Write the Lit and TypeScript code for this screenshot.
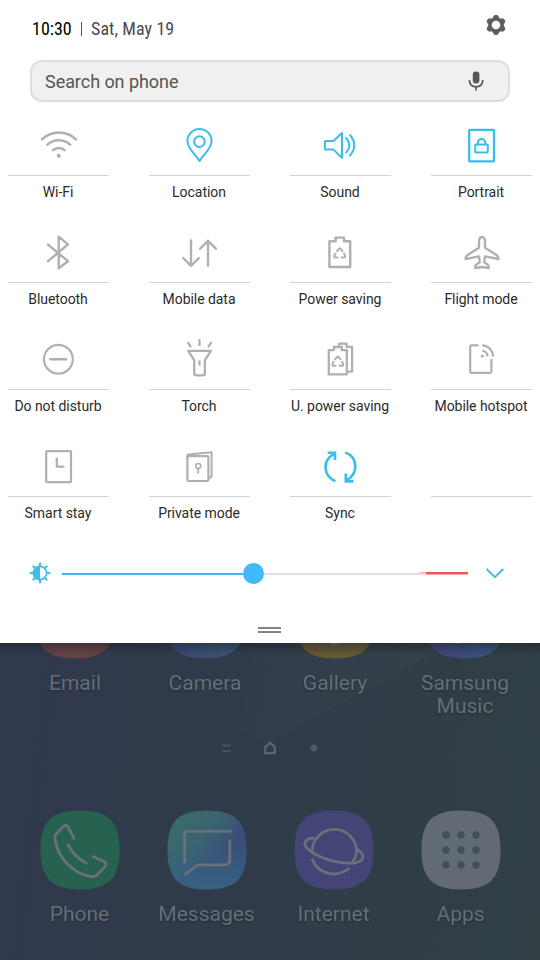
import { LitElement, html, svg, css, type SVGTemplateResult } from "lit";
import { customElement, property } from "lit/decorators.js";

const recycle = (x: number, y: number) => svg`
  <g transform="translate(${x} ${y})" stroke-width="2" stroke-linecap="butt">
    <path d="M-3.2 -1.4L-0.7 -4.6Q0 -5.4 0.7 -4.6L3.2 -1.4"/>
    <path d="M-4 -0.4L-5.3 2.4Q-6 4.4 -4.2 4.4L-1.4 4.4"/>
    <path d="M4 -0.4L5.3 2.4Q6 4.4 4.2 4.4L1 4.4"/>
  </g>`;

const icons: Record<string, SVGTemplateResult> = {
  wifi: svg`
    <path stroke-width="2.5" d="M8 18.3A24.5 24.5 0 0 1 42 18.3M13.4 23.7A16.6 16.6 0 0 1 36.2 23.7M19 29.2A8.6 8.6 0 0 1 30.6 29.2"/>
    <circle class="solid" cx="24.7" cy="34.8" r="2"/>`,
  location: svg`
    <path d="M24.5 40C21 33.8 12.4 28 12.4 20A12.1 12.1 0 0 1 36.6 20C36.6 28 28 33.8 24.5 40Z"/>
    <circle cx="24.4" cy="20.6" r="5.3"/>`,
  sound: svg`
    <path d="M9.4 20H17.4L26 12V36.8L17.4 28.6H9.4Q8.9 28.6 8.9 28V20.6Q8.9 20 9.4 20Z"/>
    <path d="M30.2 17Q36.6 24.3 30.2 31.5M34 14Q42.6 24.3 34 34.5"/>`,
  portrait: svg`
    <rect x="12.2" y="8.9" width="24.8" height="31.4" rx="0.6" stroke-width="2.3"/>
    <rect x="18.2" y="23.6" width="12.6" height="8" rx="0.8"/>
    <path d="M20.8 23.4V21.6A3.7 3.7 0 0 1 28.2 21.6V23.4"/>`,
  bluetooth: svg`<path stroke-width="2.4" d="M14 16.6L34 33.2L24.7 40.2V8.6L34 16.4L14 33.2"/>`,
  data: svg`<path stroke-width="2.4" d="M16 12.4V37.4M8.2 30L16 37.8L23.8 30M33 37.6V13M25.2 20.6L33 12.8L40.8 20.6"/>`,
  power: svg`
    <path d="M13.4 13.2H19.6V9.6H28V13.2H34.2V39H13.4Z" stroke-width="2.4"/>
    ${recycle(23.7, 25.2)}`,
  flight: svg`<path stroke-width="2.4" d="M25 9C22.9 9 22 11.2 22 14V19.8L10.2 27.2Q8.4 28.6 8.6 31L22 28.4Q22.6 31.6 22.6 34.6L19 36.8Q18 38 18.3 40L25 39L31.7 40Q32 38 31 36.8L27.4 34.6Q27.4 31.6 28 28.4L41.4 31Q41.6 28.6 39.8 27.2L28 19.8V14C28 11.2 27.1 9 25 9Z"/>`,
  dnd: svg`<circle cx="24.4" cy="24.2" r="14.4" stroke-width="2.2"/><path stroke-width="2.4" d="M16.4 24.2H32"/>`,
  torch: svg`
    <path stroke-width="2.3" d="M13.2 15.8H36L29.9 25.2V38Q29.9 40.4 27.4 40.4H21.6Q19.2 40.4 19.2 38V25.2Z"/>
    <path stroke-width="2.2" stroke-linecap="butt" d="M24.5 4V11M12.6 7.2L16 12.2M36.5 7.2L33.1 12.2M24.5 25.4V30.4"/>`,
  upower: svg`
    <path stroke-width="2.3" d="M12.8 15.2H18V12H25.8V15.2H30.8V39.4H12.8Z"/>
    <path stroke-width="2.3" d="M23.2 11.4V8.6H30.6V11.8H36.1V36.6H31.4"/>
    ${recycle(21.8, 26.4)}`,
  hotspot: svg`
    <path stroke-width="2.2" stroke-linecap="butt" d="M21.6 10.4H14.4Q13.2 10.4 13.2 11.6V36.6Q13.2 37.8 14.4 37.8H33.2Q34.4 37.8 34.4 36.6V24"/>
    <path stroke-width="2.2" stroke-linecap="butt" d="M25.2 10.4A11 11 0 0 1 36 21.4M25.2 15.8A5.6 5.6 0 0 1 30.6 21.4"/>
    <circle class="solid" cx="25.2" cy="21" r="1.6"/>`,
  stay: svg`
    <rect x="12.2" y="9.2" width="24.8" height="31" rx="0.6" stroke-width="2.2"/>
    <path stroke-width="2.3" stroke-linejoin="miter" stroke-linecap="butt" d="M22.8 15.6V24.6H30.4"/>`,
  private: svg`
    <rect x="12.4" y="14.2" width="21" height="24.8" rx="1.2" stroke-width="2.2"/>
    <path d="M12.4 15V13.2Q12.4 12.6 13.2 12.5L36.6 10.3V34.6Q36.6 35.6 34 35.8"/>
    <circle cx="23.2" cy="24" r="2.5" stroke-width="1.7"/><path stroke-width="1.8" stroke-linecap="butt" d="M23.2 26.4V31.6"/>`,
  sync: svg`
    <path stroke-width="2.6" stroke-linecap="butt" d="M19.4 39.2C7.4 34 5.6 19 18 11.8M29.2 10.4C41.6 15 43.2 31 30.6 38.4"/>
    <path stroke-width="2.6" stroke-linecap="butt" stroke-linejoin="miter" d="M11.6 10.8H19V18M29.8 31.4V39.4H37.4"/>`,
};

/* Rounded-square launcher shape on an 80 unit grid. */
const squircle = "M40 0.5C68.5 0.5 79.5 11.5 79.5 40S68.5 79.5 40 79.5S0.5 68.5 0.5 40S11.5 0.5 40 0.5Z";

@customElement("quick-tile")
class QuickTile extends LitElement {
  @property() icon = "";
  @property() label = "";
  @property({ type: Boolean, reflect: true }) on = false;

  static styles = css`
    :host { display: flex; flex-direction: column; align-items: center; color: #b0b0b0; height: 107px; }
    :host([on]) { color: #3bbdea; }
    .icon {
      width: 49px; height: 49px; display: block; fill: none;
      stroke: currentColor; stroke-width: 2; stroke-linejoin: round; stroke-linecap: round;
    }
    .solid { fill: currentColor; stroke: none; }
    .label {
      align-self: stretch; margin-top: 5px; border-top: 1px solid #d3d3d3; padding: 7px 1px 0 0;
      color: #2b2b2b; font-size: 14px; line-height: 18px; letter-spacing: -0.05px;
      white-space: nowrap; display: flex; justify-content: center;
    }
  `;

  render() {
    return html`
      <svg class="icon" viewBox="0 0 49 49">${icons[this.icon]}</svg>
      <div class="label">${this.label}</div>`;
  }
}

@customElement("app-icon")
class AppIcon extends LitElement {
  @property() kind = "";
  @property() label = "";

  static styles = css`
    :host { display: flex; flex-direction: column; align-items: center; }
    .art { width: 80px; height: 80px; display: block; overflow: visible; fill: none; }
    .line { stroke: #69707a; stroke-width: 2.8; stroke-linejoin: round; }
    .pale { fill: #69707a; }
    .dot { fill: #424e5b; }
    .label {
      margin-top: 13px; color: #656d77; font-size: 21px; line-height: 23px; text-align: center;
      text-shadow: 0 1px 2px rgba(0, 0, 0, 0.3);
    }
  `;

  art() {
    switch (this.kind) {
      case "email": return svg`<path d=${squircle} fill="#654246"/>`;
      case "camera": return svg`
        <linearGradient id="g"><stop offset="0" stop-color="#3a4772"/><stop offset="1" stop-color="#3c5670"/></linearGradient>
        <path d=${squircle} fill="url(#g)"/>`;
      case "gallery": return svg`
        <linearGradient id="g"><stop offset="0" stop-color="#685537"/><stop offset="1" stop-color="#625c32"/></linearGradient>
        <path d=${squircle} fill="url(#g)"/><circle class="pale" cx="39.6" cy="62.5" r="4.6"/>`;
      case "music": return svg`
        <linearGradient id="g"><stop offset="0" stop-color="#43427a"/><stop offset="1" stop-color="#355676"/></linearGradient>
        <path d=${squircle} fill="url(#g)"/><ellipse class="pale" cx="31.5" cy="62.6" rx="4.4" ry="2.2"/>`;
      case "phone": return svg`
        <path d=${squircle} fill="#276150"/>
        <path class="line" d="M34.5 29.5L28.4 17.6Q26.5 13.6 23.2 16.6L16.2 24Q14.6 25.8 15 29C17.5 48 34 65 52 66.6Q55 66.8 57 65L65 56.6Q67.6 53.4 64 51.6L52 46"/>
        <path class="line" d="M27.4 33.4C31.6 42.6 38.4 49.4 47.2 53.8"/>`;
      case "messages": return svg`
        <linearGradient id="g" x1="0.1" y1="0.1" x2="0.9" y2="0.75"><stop offset="0" stop-color="#3b6b69"/><stop offset="0.4" stop-color="#3a6470"/><stop offset="0.75" stop-color="#394e79"/><stop offset="1" stop-color="#38507b"/></linearGradient>
        <linearGradient id="b" x1="0" y1="0" x2="0" y2="1"><stop offset="0.4" stop-color="#376180" stop-opacity="0"/><stop offset="1" stop-color="#376180"/></linearGradient>
        <path d=${squircle} fill="url(#g)"/><path d=${squircle} fill="url(#b)"/>
        <path class="line" d="M64.5 21.4H20.4Q17.6 21.4 17.6 24.4V53.6M62.8 29.6V50.6Q62.8 54.8 58.6 54.8H30.6L17.8 64.6"/>`;
      case "internet": return svg`
        <path d=${squircle} fill="#434577"/>
        <path class="line" d="M18 41A22.3 22.3 0 1 1 62.6 42.4Q61.6 48 58.6 52.2"/>
        <path class="line" d="M20.6 28C10.6 28.2 8.2 34 14.2 39.4C26.6 50 49.4 54.8 62.6 52.6C71 50.6 70.6 43.2 62.4 39"/>
        <path class="line" d="M18 48.4C24.5 65.6 43 68 55.6 58"/>`;
      default: return svg`
        <path d=${squircle} fill="#626a75"/>
        ${[25, 40, 55].map((y) => [25, 40, 55].map((x) => svg`<circle class="dot" cx=${x} cy=${y} r="3.7"/>`))}`;
    }
  }

  render() {
    return html`<svg class="art" viewBox="0 0 80 80">${this.art()}</svg><div class="label">${this.label}</div>`;
  }
}

@customElement("app-root")
class AppRoot extends LitElement {
  static styles = css`
    :host {
      display: flex; flex-direction: column; width: 540px; height: 960px; overflow: hidden;
      font-family: Roboto, "Liberation Sans", sans-serif; background: #2f3b47;
    }
    * { box-sizing: border-box; }
    svg { display: block; flex: none; }
    .panel { height: 643px; flex: none; background: #fff; display: flex; flex-direction: column; }
    .status { height: 60px; padding: 0 33px 3px 32px; display: flex; align-items: center; font-size: 18px; font-stretch: 75%; }
    .time { color: #000; font-weight: 450; width: 40px; }
    .rule { width: 1px; height: 14px; background: #555; margin: 0 9px 0 9px; }
    .date { color: #4a4a4a; letter-spacing: 0.08px; }
    .gear { margin: 0 0 7px auto; }
    .search {
      height: 42px; margin: 0 30px; padding: 0 24px 0 13px; border: 2px solid #dedede; border-radius: 12px;
      background: #f0f0f0; display: flex; align-items: center; justify-content: space-between;
      color: #555; font-size: 18px; letter-spacing: -0.05px;
    }
    .tiles { display: grid; grid-template-columns: repeat(4, 101px); column-gap: 40px; padding: 19px 8px 0; }
    .bright { height: 32px; margin: 8px 36px 0 28px; display: flex; align-items: center; }
    .track { flex: none; width: 406px; height: 21px; margin-left: 10px; position: relative; display: flex; align-items: center; }
    .full { width: 191px; height: 2px; margin-top: 1px; background: #40b5fc; }
    .rest { width: 167px; height: 2px; margin-top: 1px; background: #dfdfdf; }
    .hot { width: 48px; height: 3px; background: #f05558; clip-path: polygon(0 0, 100% 0, 100% 100%, 6px 100%, 6px 1px, 0 1px); }
    .under { width: 6px; height: 2px; margin: 1px -6px 0 0; background: #dfdfdf; }
    .thumb { position: absolute; left: 181px; top: 0; width: 21px; height: 21px; border-radius: 50%; background: #40b9ff; }
    .more { margin-left: auto; }
    .grip { width: 23px; height: 6px; margin: auto 0 10px 258px; border: solid #858585; border-width: 2px 0; }
    .home {
      flex: 1; position: relative; overflow: hidden; display: flex; flex-direction: column;
      background: linear-gradient(97deg, #31394d 0%, #2f3b4b 38%, #303c47 62%, #313f45 100%);
    }
    .facet {
      position: absolute; inset: 0;
      background: linear-gradient(100deg, rgba(60, 76, 88, 0) 35%, rgba(66, 80, 88, 0.22) 75%);
      clip-path: polygon(0 0, 84% 0, 50% 99px, 34% 70px, 0 0);
    }
    .shade { position: absolute; inset: 0 0 auto; height: 12px; background: linear-gradient(rgba(20, 26, 32, 0.4), rgba(20, 26, 32, 0)); }
    .row { position: relative; display: grid; grid-template-columns: repeat(4, 130px); padding-left: 10px; margin-top: -64px; }
    .pages { position: relative; display: flex; align-items: center; height: 14px; margin: 23px 0 0 221px; }
    .dock { position: relative; display: grid; grid-template-columns: repeat(4, 127px); padding-left: 16px; margin-top: 55px; }
  `;

  tiles: [string, string, boolean][] = [
    ["wifi", "Wi-Fi", false], ["location", "Location", true], ["sound", "Sound", true], ["portrait", "Portrait", true],
    ["bluetooth", "Bluetooth", false], ["data", "Mobile data", false], ["power", "Power saving", false], ["flight", "Flight mode", false],
    ["dnd", "Do not disturb", false], ["torch", "Torch", false], ["upower", "U. power saving", false], ["hotspot", "Mobile hotspot", false],
    ["stay", "Smart stay", false], ["private", "Private mode", false], ["sync", "Sync", true], ["", "", false],
  ];

  render() {
    return html`
      <section class="panel">
        <header class="status">
          <span class="time">10:30</span><span class="rule"></span><span class="date">Sat, May 19</span>
          <svg class="gear" width="22" height="22" viewBox="-11 -11 22 22">
            <path fill="#5e5e5e" stroke="#5e5e5e" stroke-width="2" stroke-linejoin="round"
              d="M-1 -9H1L3.2 -5.6L7.2 -5.5L8.3 -3.7L6.5 0L8.3 3.7L7.2 5.5L3.2 5.6L1 9H-1L-3.2 5.6L-7.2 5.5L-8.3 3.7L-6.5 0L-8.3 -3.7L-7.2 -5.5L-3.2 -5.6Z"/>
            <circle r="4.3" fill="#fff"/>
          </svg>
        </header>
        <div class="search">
          <span>Search on phone</span>
          <svg width="16" height="22" viewBox="0 0 16 22" fill="none" stroke="#585858" stroke-width="1.7">
            <rect x="4.8" y="1.4" width="6.6" height="12.2" rx="3" fill="#585858" stroke="none"/>
            <path d="M1.3 10.2Q2 16.9 8.1 16.9T14.9 10.2M8.1 17V20.6"/>
          </svg>
        </div>
        <div class="tiles">
          ${this.tiles.map(([icon, label, on]) => html`<quick-tile .icon=${icon} .label=${label} ?on=${on}></quick-tile>`)}
        </div>
        <div class="bright">
          <svg width="24" height="24" viewBox="-12 -12 24 24" fill="none" stroke="#3fbeea" stroke-width="2">
            <circle r="6.6" stroke-width="1.6"/>
            <path d="M0 -7.4A7.4 7.4 0 0 0 0 7.4Z" fill="#3fbeea" stroke="none"/>
            ${[0, 45, 90, 135, 180, 225, 270, 315].map((a) => svg`<path transform="rotate(${a})" d="M0 -6.6V-10.3"/>`)}
          </svg>
          <div class="track">
            <div class="full"></div><div class="rest"></div><div class="under"></div><div class="hot"></div>
            <div class="thumb"></div>
          </div>
          <svg class="more" width="20" height="14" viewBox="0 0 20 14" fill="none" stroke="#3fb9e8" stroke-width="1.9"><path d="M2.6 3L10.9 11.2L19.2 3"/></svg>
        </div>
        <div class="grip"></div>
      </section>
      <section class="home">
        <div class="facet"></div>
        <div class="row">
          <app-icon kind="email" label="Email"></app-icon>
          <app-icon kind="camera" label="Camera"></app-icon>
          <app-icon kind="gallery" label="Gallery"></app-icon>
          <app-icon kind="music" label="Samsung Music"></app-icon>
        </div>
        <div class="pages">
          <svg width="98" height="14" viewBox="0 0 98 14" fill="none" stroke="#47535f" stroke-width="2">
            <path d="M1 4.6H10M1 10H10"/>
            <path stroke="#5b6670" stroke-width="2.2" d="M44.2 12.2V6L49 1.8L53.8 6V12.2Z"/>
            <circle cx="93" cy="7" r="3.4" fill="#4d5963" stroke="none"/>
          </svg>
        </div>
        <div class="dock">
          <app-icon kind="phone" label="Phone"></app-icon>
          <app-icon kind="messages" label="Messages"></app-icon>
          <app-icon kind="internet" label="Internet"></app-icon>
          <app-icon kind="apps" label="Apps"></app-icon>
        </div>
        <div class="shade"></div>
      </section>`;
  }
}
